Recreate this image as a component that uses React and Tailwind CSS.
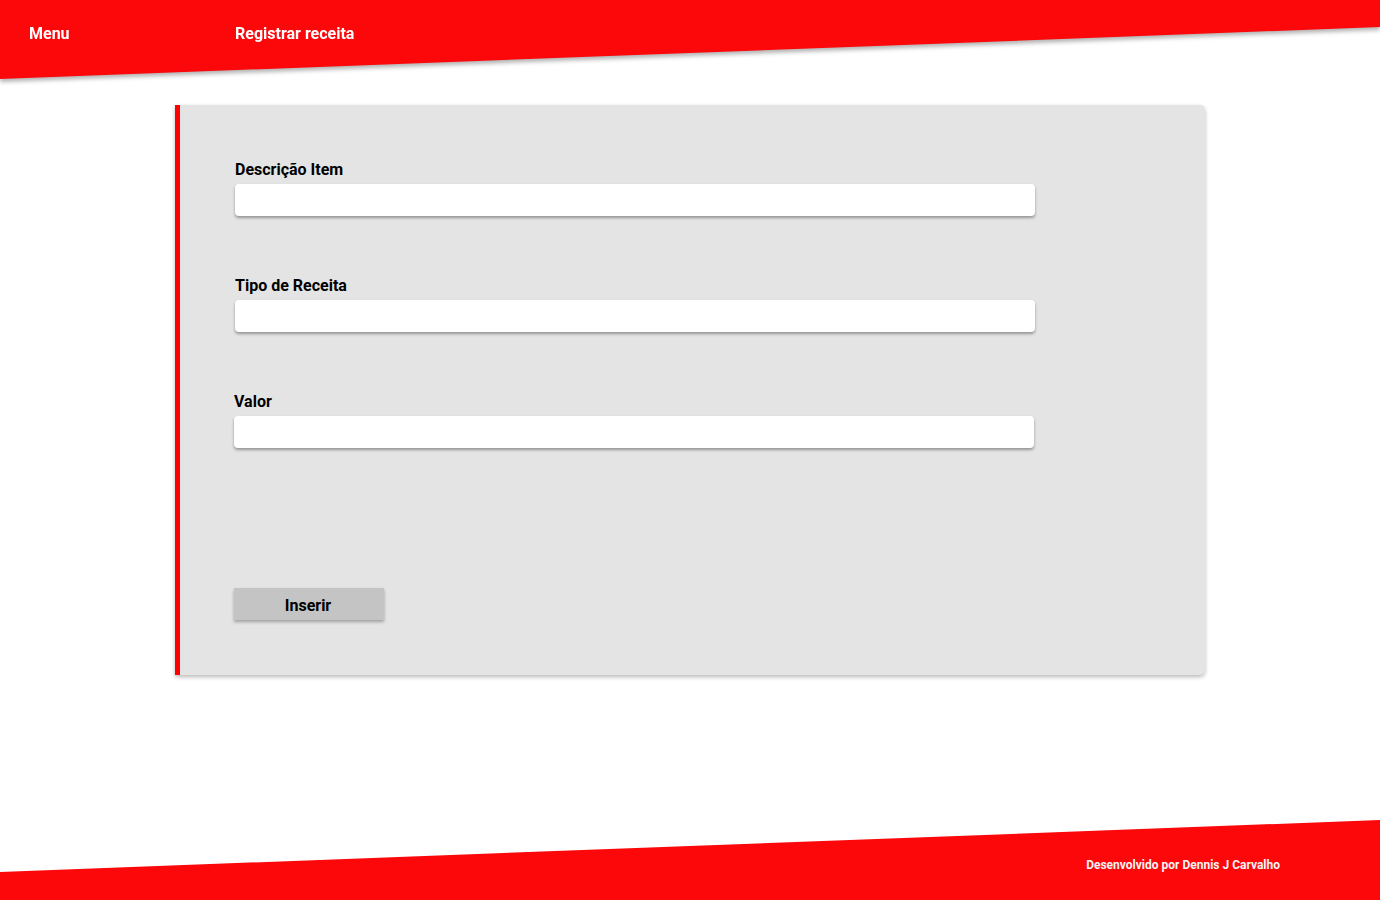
import React from "react";

function Field({ label, shift }) {
  return (
    <div className={shift ? "ml-[-1px]" : ""}>
      <label className="block text-[16px] font-bold leading-[26px] text-black mb-[1px]">{label}</label>
      <input
        type="text"
        className="block w-[800px] h-[32px] bg-white rounded-[4px] shadow-[0_2px_3px_rgba(0,0,0,0.35)] outline-none border-0 px-2"
      />
    </div>
  );
}

export default function App() {
  return (
    <div
      className="h-[900px] w-full flex flex-col justify-between bg-white overflow-hidden"
      style={{ fontFamily: "Roboto, 'Liberation Sans', sans-serif" }}
    >
      <div>
        <div className="drop-shadow-[0_3px_2px_rgba(0,0,0,0.3)]">
          <header className="h-[80px] bg-[#fc070a] [clip-path:polygon(0_0,100%_0,100%_27px,0_79px)] flex items-start pt-[22px] pl-[29px] text-white text-[16px] font-bold leading-[24px]">
            <span className="w-[206px]">Menu</span>
            <span>Registrar receita</span>
          </header>
        </div>

        <main className="mt-[25px] mx-auto w-[1030px] h-[570px] bg-[#e4e4e4] border-l-[5px] border-[#ff0000] rounded-r-[5px] shadow-[0_2px_4px_rgba(0,0,0,0.28)] pl-[55px] pt-[52px] flex flex-col">
          <div className="flex flex-col gap-[57px]">
            <Field label="Descrição Item" />
            <Field label="Tipo de Receita" />
            <Field label="Valor" shift />
          </div>
          <button className="mt-[140px] ml-[-1px] w-[150px] h-[32px] pt-[4px] pr-[2px] bg-[#c4c4c4] text-black text-[16px] font-bold leading-[24px] shadow-[0_2px_3px_rgba(0,0,0,0.3)]">
            Inserir
          </button>
        </main>
      </div>

      <footer className="h-[80px] bg-[#fc070a] [clip-path:polygon(0_52px,100%_0,100%_100%,0_100%)] flex justify-end pr-[100px] pt-[37px]">
        <span className="text-[12px] font-bold leading-[16px] text-[#f4f4f4]">Desenvolvido por Dennis J Carvalho</span>
      </footer>
    </div>
  );
}
